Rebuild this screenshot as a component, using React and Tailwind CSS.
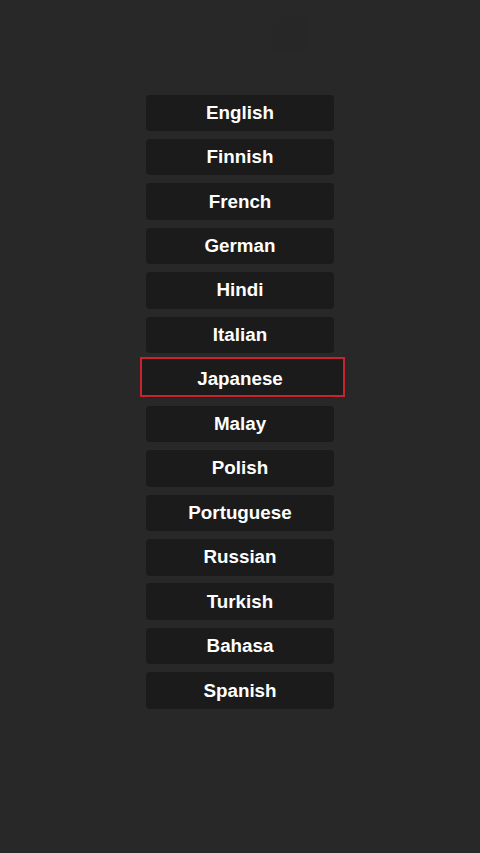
import React from 'react';

const languages = [
  'English',
  'Finnish',
  'French',
  'German',
  'Hindi',
  'Italian',
  'Japanese',
  'Malay',
  'Polish',
  'Portuguese',
  'Russian',
  'Turkish',
  'Bahasa',
  'Spanish',
];

const LanguageButton = ({ label, highlighted }) => (
  <div className="relative">
    {highlighted && (
      <div className="absolute -top-[4px] bottom-[1px] -left-[6px] -right-[11px] bg-[#1b1b1b]" />
    )}
    <button className="relative w-full h-[36.5px] rounded-[4px] bg-[#1b1b1b] text-white text-[18.8px] font-bold flex items-center justify-center">
      {label}
    </button>
    {highlighted && (
      <div className="absolute -top-[4px] bottom-[1px] -left-[6px] -right-[11px] border-2 border-[#c9232f] pointer-events-none" />
    )}
  </div>
);

const App = () => {
  return (
    <div
      className="w-[480px] h-[853px] bg-[#282828] relative overflow-hidden"
      style={{ fontFamily: '"Liberation Sans", Arial, sans-serif' }}
    >
      {/* faint icon, barely visible at the top */}
      <div className="absolute left-[273px] top-[17px] w-[36px] h-[33px] rounded-[3px] bg-[#272727]" />

      <div className="flex justify-center pt-[94.5px]">
        <div className="w-[188px] flex flex-col gap-[7.96px]">
          {languages.map((lang) => (
            <LanguageButton key={lang} label={lang} highlighted={lang === 'Japanese'} />
          ))}
        </div>
      </div>
    </div>
  );
};

export default App;
